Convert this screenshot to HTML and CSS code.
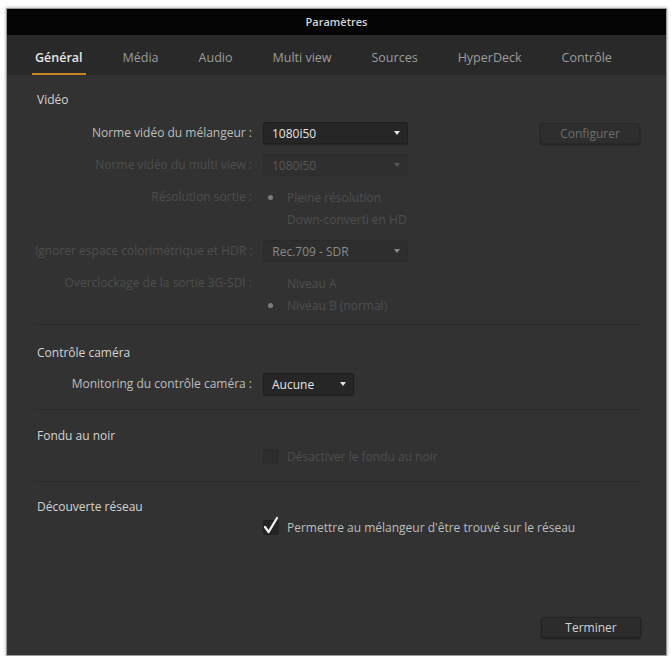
FILE: index.html
```html
<!DOCTYPE html>
<html lang="fr">
<head>
    <meta charset="UTF-8">
    <meta name="viewport" content="width=device-width, initial-scale=1">
    <title>Paramètres</title>
    <link rel="stylesheet" href="styles.css">
</head>
<body>
    <div class="dialog">
        <div class="titlebar">Paramètres</div>
        <nav class="tabs">
            <span class="tab active">Général</span>
            <span class="tab">Média</span>
            <span class="tab">Audio</span>
            <span class="tab">Multi view</span>
            <span class="tab">Sources</span>
            <span class="tab">HyperDeck</span>
            <span class="tab">Contrôle</span>
        </nav>
        <div class="content">
            <!-- Vidéo -->
            <section class="group group-video">
                <h2 class="group-title">Vidéo</h2>
                <div class="rows">
                    <div class="row">
                        <span class="row-label">Norme vidéo du mélangeur :</span>
                        <div class="select"><span>1080i50</span><svg class="arrow" width="6" height="4" viewBox="0 0 6 4"><path d="M0 0h6L3 4z" fill="currentColor"/></svg></div>
                        <button class="btn btn-off">Configurer</button>
                    </div>
                    <div class="row dim">
                        <span class="row-label">Norme vidéo du multi view :</span>
                        <div class="select select-dim"><span>1080i50</span><svg class="arrow" width="6" height="4" viewBox="0 0 6 4"><path d="M0 0h6L3 4z" fill="currentColor"/></svg></div>
                    </div>
                    <div class="row dim">
                        <span class="row-label">Résolution sortie :</span>
                        <div class="options">
                            <div class="option"><span class="radio"><i class="dot"></i></span>Pleine résolution</div>
                            <div class="option"><span class="radio"></span>Down-converti en HD</div>
                        </div>
                    </div>
                    <div class="row dim">
                        <span class="row-label">Ignorer espace colorimétrique et HDR :</span>
                        <div class="select select-half"><span>Rec.709 - SDR</span><svg class="arrow" width="6" height="4" viewBox="0 0 6 4"><path d="M0 0h6L3 4z" fill="currentColor"/></svg></div>
                    </div>
                    <div class="row dim">
                        <span class="row-label">Overclockage de la sortie 3G-SDI :</span>
                        <div class="options">
                            <div class="option"><span class="radio"></span>Niveau A</div>
                            <div class="option"><span class="radio"><i class="dot"></i></span>Niveau B (normal)</div>
                        </div>
                    </div>
                </div>
            </section>

            <!-- Contrôle caméra -->
            <section class="group group-camera">
                <h2 class="group-title">Contrôle caméra</h2>
                <div class="rows">
                    <div class="row">
                        <span class="row-label">Monitoring du contrôle caméra :</span>
                        <div class="select select-small"><span>Aucune</span><svg class="arrow" width="6" height="4" viewBox="0 0 6 4"><path d="M0 0h6L3 4z" fill="currentColor"/></svg></div>
                    </div>
                </div>
            </section>

            <!-- Fondu au noir -->
            <section class="group group-fade">
                <h2 class="group-title">Fondu au noir</h2>
                <div class="row dim">
                    <span class="row-label"></span>
                    <label class="checkline"><span class="check check-dim"></span>Désactiver le fondu au noir</label>
                </div>
            </section>

            <!-- Découverte réseau -->
            <section class="group group-network">
                <h2 class="group-title">Découverte réseau</h2>
                <div class="row">
                    <span class="row-label"></span>
                    <label class="checkline"><span class="check"><svg width="18" height="19" viewBox="0 0 18 19"><path d="M3 11l3.6 5L15 2" fill="none" stroke="#f0f0f0" stroke-width="2.3" stroke-linecap="round" stroke-linejoin="round"/></svg></span>Permettre au mélangeur d'être trouvé sur le réseau</label>
                </div>
            </section>

            <div class="footer">
                <button class="btn">Terminer</button>
            </div>
        </div>
    </div>
</body>
</html>
```

FILE: styles.css
```css
html, body {
    margin: 0;
    padding: 0;
}
body {
    background: #fff;
    font-family: "Open Sans", "Noto Sans", sans-serif;
    padding: 8px 0 0 6px;
}
.dialog {
    width: 661px;
    height: 648px;
    background: #323232;
    border: 1px solid #9a9a9a;
    box-sizing: border-box;
    box-shadow: 0 0 3px rgba(0,0,0,0.35);
    display: flex;
    flex-direction: column;
}
.titlebar {
    height: 26px;
    line-height: 26px;
    background: #050505;
    color: #d4d4d4;
    font-size: 11px;
    font-weight: 600;
    text-align: center;
}
.tabs {
    display: flex;
    gap: 34px;
    height: 40px;
    padding-left: 25px;
    background: #292929;
}
.tab {
    box-sizing: border-box;
    height: 40px;
    padding: 14px 3px 0;
    font-size: 12.5px;
    line-height: 18px;
    color: #9c9c9c;
    border-bottom: 2px solid transparent;
}
.tab.active {
    color: #e6e6e6;
    font-weight: 600;
    border-bottom-color: #c98520;
}
.content {
    flex: 1;
    display: flex;
    flex-direction: column;
    padding: 0 24px 17px 28px;
}
.group {
    border-bottom: 1px solid #2a2a2a;
}
.group-title {
    margin: 0 0 0 2px;
    font-size: 12px;
    font-weight: 400;
    line-height: 18px;
    color: #d4d4d4;
}
.group-video { padding: 16px 0 8px; }
.group-video .rows { margin-top: 13px; }
.group-camera { padding: 19px 0 14px; }
.group-camera .rows { margin-top: 11px; }
.group-fade { padding: 17px 0 14px; }
.group-network { padding: 16px 0 0; border-bottom: none; }
.rows {
    display: flex;
    flex-direction: column;
    gap: 10px;
}
.row {
    display: flex;
    align-items: flex-start;
    font-size: 12px;
    color: #bebebe;
}
.row.dim {
    color: #4e4e4e;
}
.row-label {
    flex: 0 0 217px;
    margin-right: 11px;
    text-align: right;
    line-height: 22px;
    white-space: nowrap;
}
.select {
    box-sizing: border-box;
    width: 145px;
    height: 22px;
    padding: 0 7px 0 8px;
    display: flex;
    align-items: center;
    justify-content: space-between;
    background: #262626;
    border: 1px solid #1f1f1f;
    border-radius: 2px;
    box-shadow: 0 1px 1px rgba(0,0,0,0.25);
    color: #e4e4e4;
}
.select-dim {
    background: #2f2f2f;
    border-color: #2d2d2d;
    box-shadow: none;
    color: #585858;
}
.select-half {
    background: #2e2e2e;
    border-color: #2b2b2b;
    box-shadow: none;
    color: #8a8a8a;
}
.select-small {
    width: 91px;
}
.arrow {
    display: block;
}
.btn {
    box-sizing: border-box;
    width: 100px;
    height: 21px;
    padding: 0;
    font-family: inherit;
    font-size: 12px;
    color: #d4d4d4;
    background: #2c2c2c;
    border: 1px solid #222;
    border-radius: 3px;
    box-shadow: 0 1px 2px rgba(0,0,0,0.4);
}
.btn-off {
    margin: 1px 2px 0 auto;
    color: #6e6e6e;
    background: #2e2e2e;
    border-color: #282828;
}
.options {
    display: flex;
    flex-direction: column;
}
.option {
    display: flex;
    align-items: center;
    height: 22px;
}
.radio {
    width: 24px;
    display: flex;
    align-items: center;
}
.dot {
    width: 5px;
    height: 5px;
    margin-left: 5px;
    border-radius: 50%;
    background: #7c7c7c;
}
.checkline {
    display: flex;
    align-items: center;
    height: 22px;
}
.check {
    box-sizing: border-box;
    width: 16px;
    height: 15px;
    margin-right: 8px;
    background: #242424;
    border: 1px solid #202020;
    border-radius: 2px;
    display: flex;
    align-items: flex-end;
    justify-content: center;
}
.check svg {
    display: block;
    flex-shrink: 0;
    margin-bottom: -1px;
}
.check-dim {
    background: #2d2d2d;
    border-color: #2b2b2b;
}
.footer {
    margin-top: auto;
    display: flex;
    justify-content: flex-end;
    padding-right: 1px;
}
```
